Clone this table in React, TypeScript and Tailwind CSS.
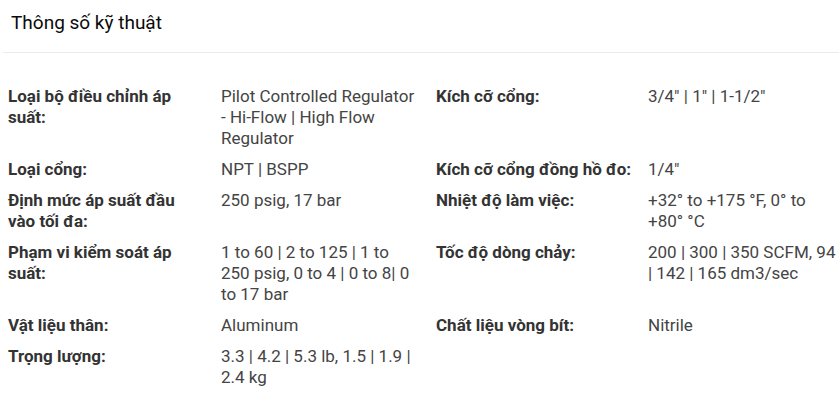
import React from 'react';

interface SpecRow {
  label: string;
  value: string;
  label2?: string;
  value2?: string;
}

const rows: SpecRow[] = [
  {
    label: 'Loại bộ điều chỉnh áp suất:',
    value: 'Pilot Controlled Regulator - Hi-Flow | High Flow Regulator',
    label2: 'Kích cỡ cổng:',
    value2: '3/4" | 1" | 1-1/2"',
  },
  { label: 'Loại cổng:', value: 'NPT | BSPP', label2: 'Kích cỡ cổng đồng hồ đo:', value2: '1/4"' },
  {
    label: 'Định mức áp suất đầu vào tối đa:',
    value: '250 psig, 17 bar',
    label2: 'Nhiệt độ làm việc:',
    value2: '+32° to +175 °F, 0° to +80° °C',
  },
  {
    label: 'Phạm vi kiểm soát áp suất:',
    value: '1 to 60 | 2 to 125 | 1 to 250 psig, 0 to 4 | 0 to 8| 0 to 17 bar',
    label2: 'Tốc độ dòng chảy:',
    value2: '200 | 300 | 350 SCFM, 94 | 142 | 165 dm3/sec',
  },
  { label: 'Vật liệu thân:', value: 'Aluminum', label2: 'Chất liệu vòng bít:', value2: 'Nitrile' },
  { label: 'Trọng lượng:', value: '3.3 | 4.2 | 5.3 lb, 1.5 | 1.9 | 2.4 kg' },
];

export default function App() {
  return (
    <div className="w-[839px] h-[404px] bg-white overflow-hidden" style={{ fontFamily: 'Roboto, "Noto Sans", sans-serif' }}>
      <div className="px-[11px] pt-[10px] pb-[17px] text-[19px] leading-[25px] text-[#0a0a0a]">Thông số kỹ thuật</div>
      <div className="ml-[3px] h-px bg-[#ebebeb]" />
      <div className="pt-[33px] pl-[8px] grid grid-cols-[213px_215px_212px_1fr] gap-y-[10px] text-[17px] leading-[21px]">
        {rows.map((r, i) => (
          <React.Fragment key={i}>
            <div className="pr-5 font-bold text-[#333]">{r.label}</div>
            <div className="pr-5 text-[#444]">{r.value}</div>
            <div className="pr-4 font-bold text-[#333]">{r.label2}</div>
            <div className="text-[#444]">{r.value2}</div>
          </React.Fragment>
        ))}
      </div>
    </div>
  );
}
